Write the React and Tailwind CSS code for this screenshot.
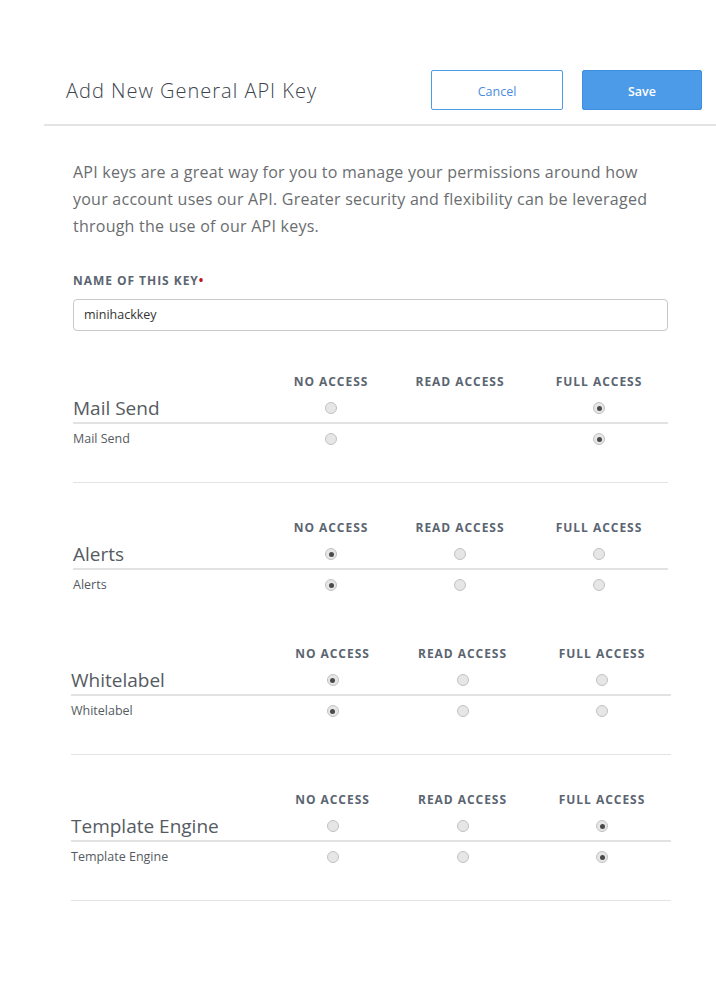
import React from "react";

const font = { fontFamily: "'Open Sans', Lato, sans-serif" };

function Radio({ checked }) {
  return (
    <span className="inline-flex h-[12px] w-[12px] items-center justify-center rounded-full border border-[#c2c2c2] bg-[#e6e6e6]">
      {checked ? <span className="h-[5px] w-[5px] rounded-full bg-[#4a4a4a]" /> : null}
    </span>
  );
}

function Section({ title, values, readDisabled, divider, wide, className = "" }) {
  const cols = wide
    ? "grid grid-cols-[191px_141px_119px_160px] items-center"
    : "grid grid-cols-[188px_140px_118px_160px] items-center";
  return (
    <div className={className}>
      <div className={cols + " text-[12px] font-bold tracking-[0.08em] text-[#5b6571]"}>
        <div />
        <div className="text-center">NO ACCESS</div>
        <div className="text-center">READ ACCESS</div>
        <div className="text-center">FULL ACCESS</div>
      </div>
      <div className={cols + " mt-[3px] h-[22px]"}>
        <div className="text-[19px] text-[#555b62]">{title}</div>
        {values.map((v, i) => (
          <div key={i} className="flex justify-center">
            {i === 1 && readDisabled ? null : <Radio checked={v} />}
          </div>
        ))}
      </div>
      <div className="mt-[6px] h-[2px] bg-[#e2e2e2]" />
      <div className={cols + " mt-[6px] h-[18px]"}>
        <div className="text-[12.5px] text-[#555b62]">{title}</div>
        {values.map((v, i) => (
          <div key={i} className="flex justify-center">
            {i === 1 && readDisabled ? null : <Radio checked={v} />}
          </div>
        ))}
      </div>
      {divider ? <div className="mt-[34px] h-px bg-[#e4e4e4]" /> : null}
    </div>
  );
}

export default function App() {
  return (
    <div className="min-h-[990px] w-[716px] bg-white" style={font}>
      <div className="pt-[70px]">
        <div className="ml-[44px] flex items-center border-b-2 border-[#e4e4e4] pb-[14px]">
          <h1 className="ml-[22px] pt-[2px] text-[20px] font-light tracking-[0.05em] text-[#3b434c]">
            Add New General API Key
          </h1>
          <div className="ml-auto flex gap-[19px] pr-[14px]">
            <button className="h-[40px] w-[132px] rounded-[2px] border border-[#4d9ce8] pt-[5px] text-[12.5px] text-[#4a8de0]">
              Cancel
            </button>
            <button className="h-[40px] w-[120px] rounded-[2px] border border-[#3d8ede] bg-[#4b9be8] pt-[5px] text-[12.5px] font-semibold text-white">
              Save
            </button>
          </div>
        </div>
      </div>
      <div className="ml-[73px] w-[595px]">
        <p className="mt-[33px] text-[16px] leading-[27px] tracking-[0.015em] text-[#6a6d70]">
          API keys are a great way for you to manage your permissions around how your account uses our API. Greater security and flexibility can be leveraged through the use of our API keys.
        </p>
        <div className="mt-[32px] text-[12px] font-bold tracking-[0.08em] text-[#5b6571]">
          NAME OF THIS KEY<span className="text-[#c0151b]">•</span>
        </div>
        <div className="mt-[9px] flex h-[32px] items-center rounded-[4px] border border-[#c8c8c8] px-[10px] text-[12.5px] text-[#333]">
          minihackkey
        </div>
        <Section className="mt-[42px]" title="Mail Send" values={[false, false, true]} readDisabled divider />
        <Section className="mt-[36px]" title="Alerts" values={[true, false, false]} />
        <Section className="-ml-[2px] mt-[51px] w-[600px]" wide title="Whitelabel" values={[true, false, false]} divider />
        <Section className="-ml-[2px] mt-[36px] w-[600px]" wide title="Template Engine" values={[false, false, true]} divider />
      </div>
    </div>
  );
}
